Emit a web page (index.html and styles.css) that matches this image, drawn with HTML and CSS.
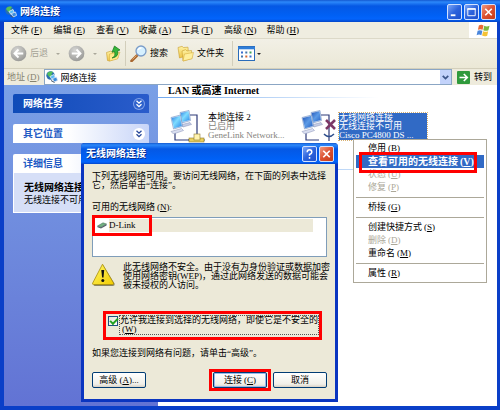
FILE: index.html
```html
<!DOCTYPE html>
<html lang="zh-CN">
<head>
<meta charset="utf-8">
<title>网络连接</title>
<link rel="stylesheet" href="styles.css">
</head>
<body>
<svg class="defs" aria-hidden="true">
  <defs>
    <linearGradient id="screen" x1="0" y1="0" x2="1" y2="1">
      <stop offset="0" stop-color="#2f7de0"/><stop offset=".45" stop-color="#7fdcff"/><stop offset="1" stop-color="#2a86e8"/>
    </linearGradient>
    <linearGradient id="screenDim" x1="0" y1="0" x2="1" y2="1">
      <stop offset="0" stop-color="#2456b8"/><stop offset=".5" stop-color="#5c9be6"/><stop offset="1" stop-color="#2560c4"/>
    </linearGradient>
    <radialGradient id="gray" cx=".4" cy=".3" r=".8">
      <stop offset="0" stop-color="#d6d6d4"/><stop offset="1" stop-color="#92928f"/>
    </radialGradient>
    <linearGradient id="folder" x1="0" y1="0" x2="0" y2="1">
      <stop offset="0" stop-color="#fff3a4"/><stop offset="1" stop-color="#eec443"/>
    </linearGradient>
    <linearGradient id="warn" x1="0" y1="0" x2="1" y2="1">
      <stop offset="0" stop-color="#fff86a"/><stop offset="1" stop-color="#f3cc00"/>
    </linearGradient>
    <symbol id="globe" viewBox="0 0 12 12">
      <circle cx="4.5" cy="4.5" r="4.2" fill="#2b6fae"/>
      <path d="M1 3C2 .6 5 0 7 1L5.500 3 6 5 3.500 6Z" fill="#54c05a"/>
      <path d="M4 5.500 8 3.500 9.500 7 6 8.500Z" fill="#58b9f5" stroke="#e7edf8" stroke-width=".8"/>
      <path d="M6.500 7.500 10.500 6 11.600 9.500 8 11Z" fill="#3a8bdc" stroke="#dfe6f4" stroke-width=".8"/>
      <path d="M5 9.500 8.500 11.500" stroke="#456" stroke-width="1"/>
    </symbol>
    <symbol id="pcs" viewBox="0 0 22 24">
      <path d="M10 2.500 19 .500 20.500 10.500 12 13Z" fill="#dfe8f8" stroke="#557ab5" stroke-width=".5"/>
      <path d="M10.600 3 18.500 1.300 19.800 9.900 12.400 12Z" fill="var(--scr)"/>
      <path d="M12 14.500 20 12.500 21.500 14.500 13 17Z" fill="#c4cde6" stroke="#8791b6" stroke-width=".5"/>
      <path d="M1 7.500 10.500 5 12.500 16.500 3.500 19Z" fill="#dfe8f8" stroke="#557ab5" stroke-width=".5"/>
      <path d="M1.600 8 10 5.900 11.800 16 4 18.200Z" fill="var(--scr)"/>
      <path d="M1 21.500 11.500 18.500 13.500 20.500 3.500 24Z" fill="#d9def0" stroke="#8791b6" stroke-width=".5"/>
    </symbol>
    <symbol id="chev" viewBox="0 0 12 12">
      <path d="M3.500 2.800 6 5.200 8.500 2.800M3.500 6.300 6 8.700 8.500 6.300" fill="none" stroke="currentColor" stroke-width="1.300"/>
    </symbol>
  </defs>
</svg>

<div class="window">
  <header class="titlebar">
    <svg class="title-icon" aria-hidden="true"><use href="#globe"/></svg>
    <h1>网络连接</h1>
    <div class="controls">
      <button class="ctl" aria-label="最小化"><svg viewBox="0 0 14 14"><path d="M3 10.500H8" stroke="#fff" stroke-width="2"/></svg></button>
      <button class="ctl" aria-label="最大化"><svg viewBox="0 0 14 14"><path d="M3 3.500H11V11H3Z" fill="none" stroke="#fff"/><path d="M2.500 3.800H11.500" stroke="#fff" stroke-width="1.600"/></svg></button>
      <button class="ctl ctl-close" aria-label="关闭"><svg viewBox="0 0 14 14"><path d="M3.500 3.500 10.500 10.500M10.500 3.500 3.500 10.500" stroke="#fff" stroke-width="1.800"/></svg></button>
    </div>
  </header>

  <div class="menubar">
    <nav>
      <button>文件<span class="key">(<u>F</u>)</span></button>
      <button>编辑<span class="key">(<u>E</u>)</span></button>
      <button>查看<span class="key">(<u>V</u>)</span></button>
      <button>收藏<span class="key">(<u>A</u>)</span></button>
      <button>工具<span class="key">(<u>T</u>)</span></button>
      <button>高级<span class="key">(<u>N</u>)</span></button>
      <button>帮助<span class="key">(<u>H</u>)</span></button>
    </nav>
    <div class="flag">
      <svg viewBox="0 0 16 14" aria-hidden="true">
        <path d="M3 1.500Q5.500 0 8 1.500L7 6.300Q4.500 5 2 6.300Z" fill="#ea6a35"/>
        <path d="M8.800 2Q11.500 3.300 14.500 2L13.300 6.800Q10.500 8 7.800 6.700Z" fill="#7cb83e"/>
        <path d="M1.700 7.300Q4.200 6 6.800 7.300L5.700 12Q3.200 10.800.600 12Z" fill="#4a86dc"/>
        <path d="M7.600 7.800Q10.300 9 13 7.800L12 12.600Q9.200 13.800 6.500 12.500Z" fill="#f5c234"/>
      </svg>
    </div>
  </div>

  <div class="toolbar">
    <div class="tool-group nav-tools">
      <button class="tool dim" disabled><svg class="i17" viewBox="0 0 18 18"><circle cx="9" cy="9" r="8.300" fill="url(#gray)"/><path d="M14 9H5M9 4.800 4.800 9 9 13.200" fill="none" stroke="#fff" stroke-width="2"/></svg>后退</button>
      <span class="caret dim-caret"></span>
      <button class="tool dim" disabled aria-label="前进"><svg class="i17" viewBox="0 0 18 18"><circle cx="9" cy="9" r="8.300" fill="url(#gray)"/><path d="M4 9H13M9 4.800 13.200 9 9 13.200" fill="none" stroke="#fff" stroke-width="2"/></svg></button>
      <span class="caret dim-caret"></span>
      <button class="tool" aria-label="向上"><svg class="i17" viewBox="0 0 17 17"><path d="M1.500 7.500 6 6 7.500 7.300 12 6.500 13 13 4.500 16 2.500 15.500Z" fill="url(#folder)" stroke="#c89c2e" stroke-width=".6"/><path d="M4.500 9 15 7 12.500 14 4.500 16Z" fill="#ffe98a" stroke="#d3a637" stroke-width=".5"/><path d="M7 13Q11 11.500 9.500 6.500L7 7.200 9.500 1 15 5 12.700 5.700Q14 12 7 13Z" fill="#35b53a" stroke="#15791b" stroke-width=".7"/></svg></button>
    </div>
    <div class="tool-group mid-tools">
      <button class="tool"><svg class="i17" viewBox="0 0 17 17"><path d="M7 10.500 1.500 16" stroke="#a8662f" stroke-width="2.600" stroke-linecap="round"/><path d="M6.500 10.500 2.500 14.500" stroke="#e0a566" stroke-width="1"/><circle cx="11" cy="6" r="5" fill="#d6f0ff" stroke="#7a9cc8" stroke-width="1.300"/><path d="M8 5Q9 2.800 11.500 3" stroke="#fff" stroke-width="1.300" fill="none"/></svg>搜索</button>
      <button class="tool"><svg class="i17" viewBox="0 0 17 17"><path d="M1 2.500 5 1.300 6.500 2.500 11 2.200 11.500 10 2.500 13Z" fill="url(#folder)" stroke="#c89c2e" stroke-width=".6"/><path d="M5 6 8.500 4.700 10 6 14.500 5.500 15 13.500 6 16Z" fill="url(#folder)" stroke="#c89c2e" stroke-width=".6"/><path d="M7.500 9 16.500 7.500 15 13.700 6 16Z" fill="#ffef9c" stroke="#d3a637" stroke-width=".5"/></svg>文件夹</button>
    </div>
    <div class="tool-group">
      <button class="tool" aria-label="视图"><svg class="i17" viewBox="0 0 17 15"><rect x=".5" y=".5" width="16" height="14" fill="#fff" stroke="#2a6cba"/><path d="M0 2H17" stroke="#2f7dd8" stroke-width="2.600"/><path d="M3 6.500H5M11.500 10.500H13.500" stroke="#3a6fd0" stroke-width="2"/><path d="M7.300 6.500H9.300M3 10.500H5" stroke="#47a" stroke-width="2"/><path d="M11.500 6.500H13.500" stroke="#3da35a" stroke-width="2"/><path d="M7.300 10.500H9.300" stroke="#d8682e" stroke-width="2"/></svg></button>
      <span class="caret"></span>
    </div>
  </div>

  <div class="address">
    <label for="addr">地址<span class="key">(<u>D</u>)</span></label>
    <div class="combo">
      <svg class="addr-icon" aria-hidden="true"><use href="#globe"/></svg>
      <input id="addr" type="text" value="网络连接">
      <button class="drop" aria-label="展开"><svg viewBox="0 0 10 10"><path d="M2.500 3.500 5 6 7.500 3.500" fill="none" stroke="#3d5689" stroke-width="1.600"/></svg></button>
    </div>
    <button class="go"><svg viewBox="0 0 13 13"><rect width="13" height="13" rx="1" fill="#2f9a3c"/><path d="M2.500 6.500H10M6.800 3 10.300 6.500 6.800 10" fill="none" stroke="#fff" stroke-width="1.600"/></svg>转到</button>
  </div>

  <div class="content">
    <aside class="side">
      <section class="panel panel-dark">
        <h2>网络任务</h2>
        <button class="fold" aria-label="展开网络任务"><svg><use href="#chev"/></svg></button>
      </section>
      <section class="panel">
        <h2>其它位置</h2>
        <button class="fold" aria-label="展开其它位置"><svg><use href="#chev"/></svg></button>
      </section>
      <section>
        <div class="panel"><h2>详细信息</h2></div>
        <div class="details"><strong>无线网络连接</strong><p>无线连接不可用</p></div>
      </section>
    </aside>
    <main>
      <h2 class="group-title">LAN 或高速 Internet</h2>
      <div class="rule"></div>
      <div class="items">
        <div class="item">
          <svg class="conn" viewBox="0 0 36 34" aria-hidden="true">
            <path d="M20 6H27V27M5 24V31H20" fill="none" stroke="#2e3a78" stroke-width="1.200"/>
            <use href="#pcs" class="lit" x="0" y="1" width="22" height="24"/>
            <path d="M18 31H35M27 26V30" stroke="#555" stroke-width="1"/><rect x="19" y="29" width="15" height="4" fill="#e9cf5b" stroke="#8d7a30" stroke-width=".6"/><rect x="24" y="25" width="6" height="6" fill="#fff3b0" stroke="#8d7a30" stroke-width=".6"/>
          </svg>
          <div class="info"><span>本地连接 2</span><span class="sub">已启用</span><span class="sub">GeneLink Network...</span></div>
        </div>
        <div class="item">
          <svg class="conn" viewBox="0 0 36 34" aria-hidden="true">
            <path d="M20 6H28V32M5 24V31H18" fill="none" stroke="#2e3a78" stroke-width="1.200"/>
            <use href="#pcs" class="unlit" x="0" y="1" width="22" height="24"/>
            <path d="M23 25Q28 30 33 25" fill="none" stroke="#2d4e8c" stroke-width="1.500"/>
            <path d="M25 11 34 20M34 11 25 20" stroke="#7c3866" stroke-width="2.600"/>
          </svg>
          <div class="info selected"><span>无线网络连接</span><span>无线连接不可用</span><span>Cisco PC4800 DS ...</span></div>
        </div>
      </div>
      <div class="rule faint"></div>
    </main>
  </div>
</div>

<div class="dialog" role="dialog" aria-labelledby="dlg-title">
  <header class="titlebar dlg-bar">
    <h2 id="dlg-title">无线网络连接</h2>
    <div class="controls">
      <button class="ctl" aria-label="帮助"><svg viewBox="0 0 14 14"><path d="M4.500 5Q4.500 2.500 7 2.500T9.500 5Q9.500 6.500 7 7.500V9M7 10.200V12" fill="none" stroke="#fff" stroke-width="1.600"/></svg></button>
      <button class="ctl ctl-close" aria-label="关闭"><svg viewBox="0 0 14 14"><path d="M3.500 3.500 10.500 10.500M10.500 3.500 3.500 10.500" stroke="#fff" stroke-width="1.800"/></svg></button>
    </div>
  </header>
  <div class="dlg-body">
    <p>下列无线网络可用。要访问无线网络，在下面的列表中选择<br>它，然后单击“连接”。</p>
    <div class="list-label" id="net-label">可用的无线网络<span class="key">(<u>N</u>)</span>:</div>
    <div class="list" role="listbox" aria-labelledby="net-label">
      <div class="row" role="option" aria-selected="true">
        <svg viewBox="0 0 10 7" aria-hidden="true"><path d="M.500 4 6 .800 9.500 2 4 5.300Z" fill="#72b182" stroke="#3f6a56" stroke-width=".5"/><path d="M.500 4 4 5.300 9.500 2V3.500L4 6.600.500 5.300Z" fill="#57616b"/></svg>
        <span>D-Link</span>
      </div>
      <span class="mark mark-net"></span>
    </div>
    <div class="warning">
      <svg viewBox="0 0 24 24" aria-hidden="true"><path d="M11 2 22.500 20.500Q23 23 20.500 23H3Q1.500 23 1.500 21.500" fill="#8a8566"/><path d="M10.500 1.200 21.500 20Q22 21.500 20.500 21.500H1.500Q0 21.500.700 20Z" fill="url(#warn)" stroke="#a88e0a" stroke-width=".8"/><path d="M9.300 7H12.200L11.500 14.500H10.100Z" fill="#111"/><circle cx="10.800" cy="17.500" r="1.500" fill="#111"/></svg>
      <p>此无线网络不安全。由于没有为身份验证或数据加密<br>使用网络密钥(WEP)，通过此网络发送的数据可能会<br>被未授权的人访问。</p>
    </div>
    <div class="allow">
      <input type="checkbox" id="allow" checked>
      <label for="allow">允许我连接到选择的无线网络，即使它是不安全的<br><span class="key">(<u>W</u>)</span></label>
    </div>
    <p class="hint">如果您连接到网络有问题，请单击“高级”。</p>
    <div class="buttons">
      <button class="btn">高级<span class="key">(<u>A</u>)</span>...</button>
      <div class="confirm">
        <div class="marked"><button class="btn btn-default">连接<span class="key">(<u>C</u>)</span></button><span class="mark mark-btn"></span></div>
        <button class="btn">取消</button>
      </div>
    </div>
  </div>
</div>

<div class="context" role="menu">
  <button role="menuitem">停用<span class="key">(<u>B</u>)</span></button>
  <button role="menuitem" class="active">查看可用的无线连接<span class="key">(<u>V</u>)</span></button>
  <button role="menuitem" disabled>状态<span class="key">(<u>U</u>)</span></button>
  <button role="menuitem" disabled>修复<span class="key">(<u>P</u>)</span></button>
  <hr>
  <button role="menuitem">桥接<span class="key">(<u>G</u>)</span></button>
  <hr>
  <button role="menuitem">创建快捷方式<span class="key">(<u>S</u>)</span></button>
  <button role="menuitem" disabled>删除<span class="key">(<u>D</u>)</span></button>
  <button role="menuitem">重命名<span class="key">(<u>M</u>)</span></button>
  <hr>
  <button role="menuitem">属性<span class="key">(<u>R</u>)</span></button>
  <span class="mark mark-menu"></span>
</div>
</body>
</html>
```
FILE: styles.css
```css
* {
  box-sizing: border-box;
}

body,
h1,
h2,
p {
  margin: 0;
}

body,
button,
input {
  font: 9px/9px "Liberation Serif", "Noto Sans CJK SC", serif;
  color: #000;
}

body {
  position: relative;
  min-height: 100vh;
}

button {
  margin: 0;
  padding: 0;
  border: 0;
  background: none;
  white-space: nowrap;
}

u {
  text-decoration-thickness: 1px;
  text-underline-offset: 1px;
}

svg {
  display: block;
  flex: none;
}

.defs {
  position: absolute;
  width: 0;
  height: 0;
}

.key {
  margin-left: 2px;
}

/* Window frame */
.window {
  display: flex;
  flex-direction: column;
  min-height: 100vh;
  padding: 0 3px 4px 4px;
  background: #0a3fc8;
}

.titlebar {
  display: flex;
  align-items: center;
  height: 22px;
  margin: 0 -3px 0 -4px;
  padding: 2px 4px 0 5px;
  background: linear-gradient(#1459d0, #2c88fa 2px, #0558e4 6px, #0060f4 15px, #0364fc 19px, #0446c8);
}

.titlebar h1,
.titlebar h2 {
  flex: 1;
  font-size: 10px;
  line-height: 12px;
  font-weight: bold;
  color: #fff;
  text-shadow: 1px 1px 0 #0b2f8c;
}

.title-icon {
  width: 12px;
  height: 12px;
  margin-right: 3px;
}

.controls {
  display: flex;
  gap: 2px;
}

.ctl {
  width: 15px;
  height: 16px;
  border: 1px solid #d2e2ff;
  border-radius: 2px;
  background: linear-gradient(135deg, #7ba6f8, #2c63dc 50%, #1e50cc);
}

.ctl-close {
  background: linear-gradient(135deg, #f09a80, #dc5030 50%, #c53c18);
}

.ctl svg {
  width: 100%;
  height: 100%;
}

/* Menu bar */
.menubar {
  display: flex;
  justify-content: space-between;
  height: 17px;
  background: #efede0;
  border-bottom: 1px solid #dcd9c8;
}

.menubar nav {
  display: flex;
  flex: 0 1 305px;
  padding-left: 7px;
}

.menubar nav button {
  flex: 1 1 0;
  text-align: left;
}

.flag {
  display: grid;
  place-items: center;
  width: 28px;
  background: #fff;
}

.flag svg {
  width: 15px;
  height: 13px;
}

/* Toolbar */
.toolbar {
  display: flex;
  align-items: center;
  height: 30px;
  padding: 2px 0;
  background: linear-gradient(#f2f0e6, #ebe8d6);
  border-bottom: 1px solid #d4d0bc;
}

.tool-group {
  display: flex;
  align-items: center;
  height: 100%;
  padding: 0 5px;
}

.tool-group + .tool-group {
  border-left: 1px solid #d2cebb;
}

.nav-tools {
  gap: 8px;
  padding: 0 3px 0 6px;
}

.mid-tools {
  gap: 9px;
  padding-right: 8px;
  padding-left: 4px;
}

.tool {
  display: flex;
  align-items: center;
  gap: 3px;
}

.tool.dim {
  color: #a5a296;
}

.i17 {
  width: 17px;
  height: 17px;
}

.caret {
  margin-left: 2px;
  border: 2px solid transparent;
  border-top-color: #222;
  border-bottom: 0;
}

.nav-tools .caret {
  margin-left: 0;
}

.nav-tools .dim-caret {
  border-top-color: #aaa79a;
}

/* Address bar */
.address {
  display: flex;
  align-items: center;
  height: 16px;
  background: #eeebdc;
}

.address label {
  padding: 0 4px 0 3px;
  color: #85826f;
}

.combo {
  display: flex;
  flex: 1;
  align-items: center;
  height: 16px;
  border: 1px solid #8ba6c4;
  background: #fff;
}

.addr-icon {
  width: 12px;
  height: 12px;
  margin: 0 3px 0 1px;
}

.combo input {
  flex: 1;
  min-width: 0;
  height: 14px;
  padding: 0;
  border: 0;
  outline: 0;
  background: none;
}

.drop {
  width: 11px;
  height: 14px;
  background: #c3d3fb;
}

.go {
  display: flex;
  align-items: center;
  gap: 4px;
  padding: 0 5px;
}

.go svg {
  width: 13px;
  height: 13px;
}

/* Content */
.content {
  display: flex;
  flex: 1;
  background: #fff;
}

.side {
  display: flex;
  flex: 0 0 154px;
  flex-direction: column;
  gap: 11px;
  padding: 9px 9px 0;
  background: linear-gradient(#7aa0e6, #6273d4);
}

.panel {
  display: flex;
  align-items: center;
  justify-content: space-between;
  height: 19px;
  padding: 0 4px 0 10px;
  border-radius: 2px 2px 0 0;
  background: linear-gradient(90deg, #fff 40%, #c8d5f8);
}

.panel h2 {
  font-size: 10px;
  line-height: 12px;
  color: #215ac4;
}

.panel-dark {
  background: linear-gradient(90deg, #0f4bb8, #2a5ccb);
}

.panel-dark h2 {
  color: #fff;
}

.fold {
  width: 12px;
  height: 12px;
  border-radius: 50%;
  background: #fff;
  color: #27489a;
}

.fold svg {
  width: 12px;
  height: 12px;
}

.panel-dark .fold {
  box-shadow: inset 0 0 0 1px #7fa0e8;
  background: #2f62cc;
  color: #fff;
}

.details {
  padding: 9px 10px 6px;
  border: 1px solid #fff;
  border-top: 0;
  background: #d6dff7;
  white-space: nowrap;
  overflow: hidden;
}

.details strong {
  font-size: 10px;
  line-height: 12px;
}

.details p {
  line-height: 12px;
}

main {
  flex: 1;
  min-width: 0;
}

.group-title {
  padding-left: 10px;
  font-size: 10px;
  line-height: 12px;
}

.rule {
  height: 1px;
  background: linear-gradient(90deg, #70a8ee, #fff 65%);
}

.faint {
  margin-top: 26px;
  background: linear-gradient(90deg, #70a8ee, #fff);
}

.items {
  display: flex;
  gap: 13px;
  padding: 11px 0 0 12px;
}

.item {
  display: flex;
  gap: 2px;
}

.item:first-child {
  flex: 0 0 118px;
}

.conn {
  width: 36px;
  height: 34px;
}

.lit {
  --scr: url(#screen);
}

.unlit {
  --scr: url(#screenDim);
}

.info {
  display: flex;
  flex-direction: column;
  align-self: flex-start;
  margin-top: 4px;
  white-space: nowrap;
}

.sub {
  color: #85837c;
}

.selected {
  width: 88px;
  outline: 1px dotted #d8b070;
  background: #316ac5;
  color: #fff;
}

/* Highlight frames */
.mark {
  position: absolute;
  border: 3px solid #f00;
  pointer-events: none;
}

.mark-net {
  inset: -3px auto auto -1px;
  width: 60px;
  height: 21px;
}

.mark-btn {
  inset: -3px -4px;
}

.mark-menu {
  inset: 12px 9px auto 5px;
  height: 21px;
}

/* Dialog */
.dialog {
  position: absolute;
  top: 143px;
  left: 81px;
  width: 257px;
  padding: 0 3px 3px;
  border-radius: 4px 4px 0 0;
  background: #0a35c0;
}

.dlg-bar {
  height: 21px;
  margin: 0 -3px;
  padding: 1px 4px 0 5px;
  border-radius: 4px 4px 0 0;
}

.dlg-body {
  padding: 8px 8px 11px;
  background: #ece9d8;
  white-space: nowrap;
}

.list-label {
  padding: 13px 0 5px;
}

.list {
  position: relative;
  height: 40px;
  padding: 1px 13px 0 1px;
  border: 1px solid #7f9db9;
  background: #fff;
}

.row {
  display: flex;
  align-items: center;
  gap: 2px;
  height: 13px;
  padding-left: 3px;
}

.row svg {
  width: 10px;
  height: 7px;
}

.row span {
  flex: 1;
  background: #ece9d8;
  line-height: 13px;
}

.warning {
  display: flex;
  gap: 7px;
  padding: 6px 0 21px;
}

.warning svg {
  width: 24px;
  height: 24px;
}

.allow {
  display: flex;
  align-items: flex-start;
  gap: 2px;
  width: 219px;
  margin-left: 11px;
  padding: 2px 0 3px 2px;
  border: 3px solid #f00;
}

.allow input {
  appearance: none;
  width: 10px;
  height: 10px;
  margin: 0;
  border: 1px solid #1c5180;
  background: linear-gradient(135deg, #e4e4de, #fff);
}

.allow input:checked::before {
  content: "";
  display: block;
  width: 6px;
  height: 3px;
  margin: 1px;
  border: solid #21a121;
  border-width: 0 0 2px 2px;
  transform: rotate(-45deg);
}

.allow label {
  outline: 1px dotted #555;
}

.hint {
  padding: 9px 0 14px;
}

.buttons,
.confirm {
  display: flex;
  justify-content: space-between;
  gap: 6px;
}

.marked {
  position: relative;
}

.btn {
  width: 54px;
  height: 16px;
  border: 1px solid #003c74;
  border-radius: 2px;
  background: linear-gradient(#fff, #f0efe8 80%, #d8d0c4);
}

.btn-default {
  box-shadow: inset 0 0 0 1px #98b8ea;
}

/* Context menu */
.context {
  position: absolute;
  top: 139px;
  left: 353px;
  display: flex;
  flex-direction: column;
  width: 134px;
  padding: 2px;
  border: 1px solid #aca899;
  background: #fff;
}

.context button {
  height: 13px;
  padding-left: 12px;
  text-align: left;
}

.context button:disabled {
  color: #aca899;
}

.context .active {
  background: #316ac5;
  color: #fff;
  font-size: 10px;
  font-weight: bold;
}

.context hr {
  width: 100%;
  margin: 3px 0;
  border: 0;
  border-top: 1px solid #aca899;
}
```
